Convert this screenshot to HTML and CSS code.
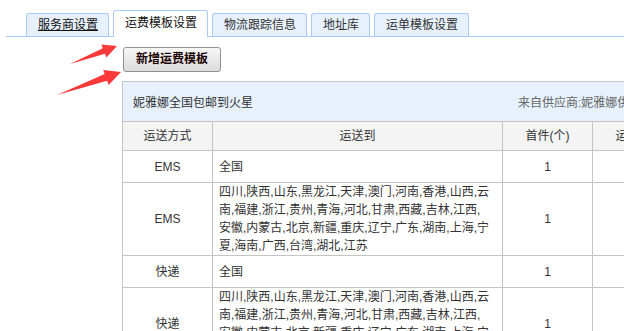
FILE: index.html
```html
<!DOCTYPE html>
<html lang="zh-CN">
  <head>
    <meta charset="UTF-8" />
    <title>运费模板设置</title>
    <link rel="stylesheet" href="styles.css">
  </head>

  <body>
    <div class="page">
      <ul class="tabs">
        <li class="tab"><a href="#">服务商设置</a></li>
        <li class="tab active">运费模板设置</li>
        <li class="tab">物流跟踪信息</li>
        <li class="tab">地址库</li>
        <li class="tab">运单模板设置</li>
      </ul>

      <div class="main">
        <button class="btn">新增运费模板</button>

        <div class="panel">
          <div class="panel-hd">
            <span class="title">妮雅娜全国包邮到火星</span>
            <span class="from">来自供应商:妮雅娜供应商</span>
          </div>
          <table class="freight">
            <colgroup>
              <col class="c-way" />
              <col class="c-area" />
              <col class="c-num" />
              <col class="c-num" />
              <col class="c-num" />
              <col class="c-num" />
            </colgroup>
            <tr>
              <th>运送方式</th>
              <th>运送到</th>
              <th>首件(个)</th>
              <th>运费(元)</th>
              <th>续件(个)</th>
              <th>续费(元)</th>
            </tr>
            <tr>
              <td class="mid">EMS</td>
              <td class="area">全国</td>
              <td class="mid">1</td>
              <td class="mid">0.00</td>
              <td class="mid">1</td>
              <td class="mid">0.00</td>
            </tr>
            <tr>
              <td class="mid">EMS</td>
              <td class="area">四川,陕西,山东,黑龙江,天津,澳门,河南,香港,山西,云南,福建,浙江,贵州,青海,河北,甘肃,西藏,吉林,江西,安徽,内蒙古,北京,新疆,重庆,辽宁,广东,湖南,上海,宁夏,海南,广西,台湾,湖北,江苏</td>
              <td class="mid">1</td>
              <td class="mid">0.00</td>
              <td class="mid">1</td>
              <td class="mid">0.00</td>
            </tr>
            <tr>
              <td class="mid">快递</td>
              <td class="area">全国</td>
              <td class="mid">1</td>
              <td class="mid">0.00</td>
              <td class="mid">1</td>
              <td class="mid">0.00</td>
            </tr>
            <tr>
              <td class="mid">快递</td>
              <td class="area">四川,陕西,山东,黑龙江,天津,澳门,河南,香港,山西,云南,福建,浙江,贵州,青海,河北,甘肃,西藏,吉林,江西,安徽,内蒙古,北京,新疆,重庆,辽宁,广东,湖南,上海,宁夏,海南,广西,台湾,湖北,江苏</td>
              <td class="mid">1</td>
              <td class="mid">0.00</td>
              <td class="mid">1</td>
              <td class="mid">0.00</td>
            </tr>
          </table>
        </div>
      </div>

      <!-- 标注箭头 -->
      <svg class="arrows" width="130" height="90" viewBox="0 0 130 90">
        <polygon points="70,54 102.8,38.2 101.4,34.5 117,36 106.4,47.5 105,43.8" />
        <polygon points="57,85 104.7,64.1 103.2,59.9 121,62 108.6,74.9 107.1,70.7" />
      </svg>
    </div>
  </body>
</html>
```

FILE: styles.css
```css
* {
  margin: 0;
  padding: 0;
}

html,
body {
  overflow: hidden;
}

body {
  background: #fff;
  font-family: "Liberation Sans", "Noto Sans CJK SC", sans-serif;
  font-size: 12px;
  color: #333;
}

.page {
  position: relative;
}

/* 顶部选项卡 */
.tabs {
  list-style: none;
  display: flex;
  align-items: flex-end;
  gap: 4px;
  margin: 10px 0 0 6px;
  padding-left: 20px;
  border-bottom: 1px solid #a9cbf3;
}

.tab {
  height: 22px;
  line-height: 22px;
  padding: 0 10px 0 11px;
  border: 1px solid #a9cbf3;
  border-bottom: none;
  border-radius: 3px 3px 0 0;
  background-color: #e7f1fd;
  color: #333;
}

.tab a {
  color: #111;
  text-decoration: underline;
}

.tab.active {
  height: 26px;
  line-height: 24px;
  margin-bottom: -1px;
  background-color: #fff;
  color: #111;
}

/* 内容 */
.main {
  padding: 10px 0 0 122px;
}

.btn {
  display: block;
  height: 25px;
  line-height: 23px;
  padding: 0 12px;
  margin: 0 0 9px 1px;
  border: 1px solid #8f8f8f;
  border-radius: 3px;
  background: linear-gradient(#f7f7f7, #dcdcdc);
  font-family: inherit;
  font-size: 12px;
  font-weight: bold;
  color: #1a0000;
}

.panel {
  width: 741px;
}

.panel-hd {
  display: flex;
  align-items: center;
  height: 39px;
  padding-left: 10px;
  border: 1px solid #c4c4c4;
  border-bottom: none;
  background-color: #e7f1fd;
}

.panel-hd .title {
  width: 385px;
  color: #333;
}

.panel-hd .from {
  color: #666;
}

.freight {
  width: 741px;
  table-layout: fixed;
  border-collapse: collapse;
}

.c-way {
  width: 90px;
}

.c-area {
  width: 290px;
}

.c-num {
  width: 90px;
}

.freight th,
.freight td {
  border: 1px solid #c4c4c4;
  font-weight: normal;
  line-height: 18px;
}

.freight th {
  height: 28px;
  background-color: #f4f4f4;
  text-align: center;
}

.freight td {
  height: 31px;
}

.freight .mid {
  text-align: center;
}

.freight .area {
  padding: 0 12px 0 6px;
}

.arrows {
  position: absolute;
  top: 0;
  left: 0;
  pointer-events: none;
}

.arrows polygon {
  fill: #fa3a3a;
}
```
